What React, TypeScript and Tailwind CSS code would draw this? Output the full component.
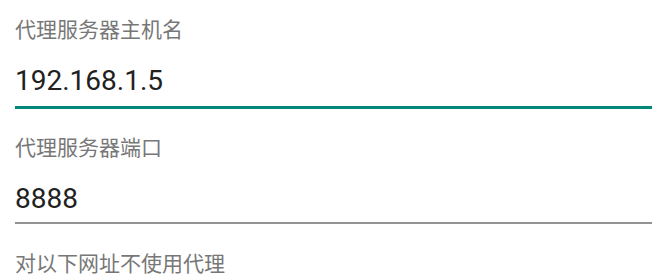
import React from "react";

type FieldProps = {
  label: string;
  value: string;
  focused?: boolean;
};

function Field({ label, value, focused }: FieldProps) {
  return (
    <div>
      <div className="h-[20px] text-[21px] leading-[20px] text-[#777777] font-['Noto_Sans_CJK_SC',sans-serif]">
        {label}
      </div>
      <div className="mt-[25px] h-[36px] text-[28px] leading-[36px] text-[#212121] font-['Roboto',sans-serif]">
        {value}
      </div>
      {focused ? (
        <div className="mt-[7px] h-[3px] bg-[#00897b]" />
      ) : (
        <div className="mt-[5px] h-[2px] bg-[#939393]" />
      )}
    </div>
  );
}

export default function App() {
  return (
    <div className="w-[652px] h-[277px] overflow-hidden bg-white pl-[15px] pt-[18px]">
      <Field label="代理服务器主机名" value="192.168.1.5" focused />
      <div className="mt-[27px]">
        <Field label="代理服务器端口" value="8888" />
      </div>
      <div className="mt-[28px] h-[20px] text-[21px] leading-[20px] text-[#777777] font-['Noto_Sans_CJK_SC',sans-serif]">
        对以下网址不使用代理
      </div>
    </div>
  );
}
